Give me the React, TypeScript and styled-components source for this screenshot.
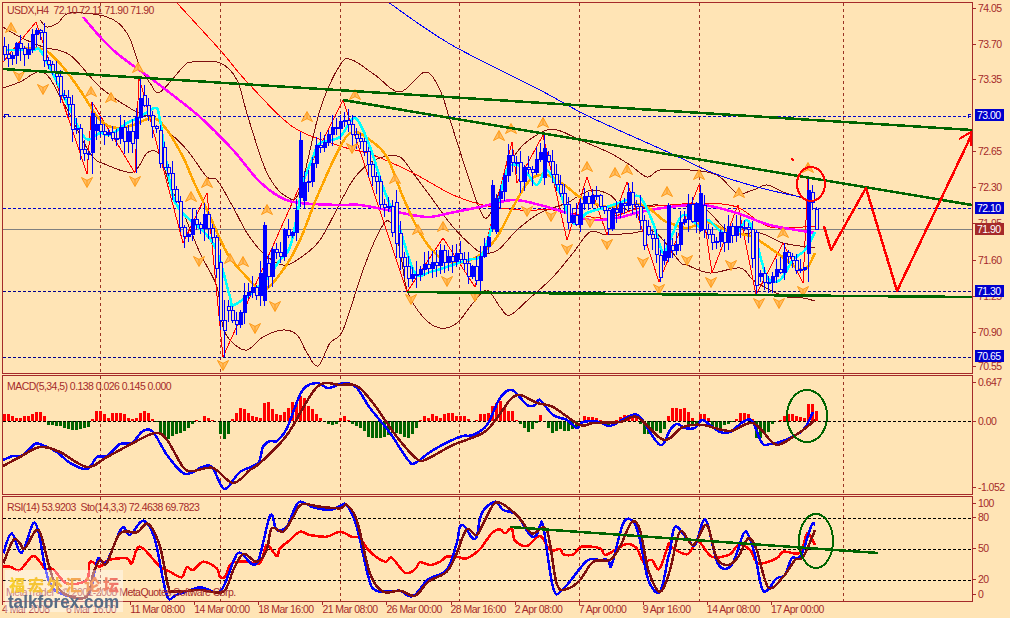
import React from "react";
import styled, { createGlobalStyle } from "styled-components";

type Pt = [number, number];
const BG = "#ffe4b5";
const BROWN = "#a52a2a";
const MAROON = "#7d0f0f";
const GREEN = "#006400";

const pts = (s: number[]): Pt[] => {
  const r: Pt[] = [];
  for (let i = 0; i + 1 < s.length; i += 2) r.push([s[i], s[i + 1]]);
  return r;
};
// points read at 3x from a crop whose corner is (ox, oy)
const crop = (ox: number, oy: number, s: number[]): Pt[] =>
  pts(s).map(([x, y]) => [ox + x / 3, oy + y / 3] as Pt);
const str = (p: Pt[]) => p.map(([x, y]) => `${x.toFixed(1)},${y.toFixed(1)}`).join(" ");
// Catmull-Rom through the points, for the indicator curves
const smooth = (p: Pt[]) => {
  let d = `M${p[0][0].toFixed(1)} ${p[0][1].toFixed(1)}`;
  for (let i = 0; i < p.length - 1; i++) {
    const a = p[Math.max(0, i - 1)];
    const b = p[i];
    const c = p[i + 1];
    const e = p[Math.min(p.length - 1, i + 2)];
    const c1: Pt = [b[0] + (c[0] - a[0]) / 6, b[1] + (c[1] - a[1]) / 6];
    const c2: Pt = [c[0] - (e[0] - b[0]) / 6, c[1] - (e[1] - b[1]) / 6];
    d += ` C${c1[0].toFixed(1)} ${c1[1].toFixed(1)} ${c2[0].toFixed(1)} ${c2[1].toFixed(1)} ${c[0].toFixed(1)} ${c[1].toFixed(1)}`;
  }
  return d;
};
const interp = (p: Pt[], x: number) => {
  if (x <= p[0][0]) return p[0][1];
  for (let i = 1; i < p.length; i++) {
    if (x <= p[i][0]) {
      const t = (x - p[i - 1][0]) / (p[i][0] - p[i - 1][0] || 1);
      return p[i - 1][1] + t * (p[i][1] - p[i - 1][1]);
    }
  }
  return p[p.length - 1][1];
};

/* ---------- main chart data ---------- */
const zigzag = pts([3, 62, 36, 22, 87, 174, 92, 102, 135, 173, 139, 77, 183, 243, 207, 193, 223, 357, 298, 190, 343, 100, 407, 292, 443, 238, 475, 287, 512, 142, 517, 183, 543, 135, 567, 240, 587, 177, 607, 235, 627, 182, 659, 282, 699, 185, 712, 273, 738, 205, 756, 295, 783, 243, 803, 283, 808, 178]);
const cyan = pts([7, 50, 33, 50, 42, 53, 67, 103, 85, 138, 100, 133, 110, 135, 127, 123, 140, 117, 155, 108, 160, 120, 170, 183, 180, 210, 213, 243, 230, 297, 234, 305, 263, 283, 280, 260, 290, 247, 298, 210, 303, 183, 313, 157, 320, 143, 340, 137, 355, 118, 370, 147, 383, 187, 400, 230, 415, 273, 430, 272, 447, 267, 467, 260, 483, 253, 497, 207, 507, 170, 517, 165, 527, 173, 537, 185, 547, 170, 560, 193, 573, 223, 587, 213, 607, 207, 627, 200, 640, 197, 653, 223, 663, 253, 670, 240, 683, 215, 700, 227, 708, 220, 723, 233, 737, 233, 747, 220, 755, 237, 767, 277, 780, 280, 793, 260, 805, 250, 815, 232]);
const orange = pts([25, 48, 45, 50, 63, 67, 80, 90, 100, 120, 117, 128, 133, 125, 153, 118, 167, 130, 183, 157, 193, 180, 207, 210, 227, 253, 243, 273, 263, 290, 283, 270, 300, 240, 317, 197, 340, 147, 353, 132, 370, 140, 387, 157, 403, 197, 420, 233, 437, 255, 457, 263, 480, 255, 497, 237, 513, 207, 530, 180, 547, 175, 567, 187, 580, 197, 607, 207, 630, 203, 647, 207, 663, 220, 670, 223, 687, 228, 707, 222, 730, 232, 753, 237, 777, 253, 803, 270, 815, 253]);
const magenta = pts([83, 17, 113, 50, 157, 83, 200, 117, 233, 150, 258, 180, 280, 197, 300, 203, 340, 205, 360, 205, 397, 212, 427, 217, 450, 213, 480, 207, 513, 200, 540, 205, 567, 213, 590, 220, 617, 218, 640, 212, 670, 207, 703, 205, 737, 213, 770, 225, 815, 233]);
const redMa = pts([177, 3, 220, 50, 248, 83, 293, 127, 340, 146, 373, 155, 413, 173, 453, 195, 483, 205, 520, 210, 553, 210, 580, 215, 607, 218, 640, 208, 670, 205, 703, 203, 737, 207, 770, 227, 815, 226]);
const blueMa = pts([388, 2, 450, 44, 540, 90, 590, 117, 670, 153, 713, 173, 757, 187, 800, 197]);
const bbUpper = pts([40, 20, 47, 27, 58, 23, 70, 13, 107, 17, 127, 33, 140, 67, 150, 83, 160, 92, 183, 67, 192, 62, 220, 63, 237, 80, 248, 117, 267, 173, 287, 197, 300, 190, 320, 110, 340, 65, 352, 60, 375, 75, 400, 92, 425, 72, 440, 90, 450, 120, 467, 173, 480, 210, 488, 217, 500, 190, 517, 152, 540, 133, 557, 130, 580, 140, 610, 153, 630, 165, 647, 177, 660, 170, 690, 170, 717, 175, 737, 193, 753, 190, 767, 185, 783, 192, 803, 198]);
const bbMid = pts([3, 27, 20, 37, 43, 47, 70, 55, 100, 87, 133, 110, 157, 120, 167, 130, 187, 150, 207, 177, 217, 180, 233, 207, 247, 233, 263, 253, 283, 265, 300, 258, 320, 240, 340, 203, 353, 180, 367, 165, 383, 157, 400, 157, 413, 173, 433, 200, 453, 227, 473, 247, 483, 253, 498, 250, 517, 230, 540, 213, 567, 203, 580, 195, 593, 190, 610, 195, 627, 210, 653, 205, 680, 207, 703, 207, 730, 232, 760, 233, 783, 243, 815, 248]);
const bbLow = pts([3, 88, 20, 82, 43, 72, 62, 100, 90, 153, 107, 165, 133, 172, 147, 153, 157, 152, 163, 163, 170, 187, 180, 205, 200, 253, 217, 287, 223, 327, 233, 343, 247, 350, 263, 337, 283, 330, 297, 335, 307, 353, 318, 366, 330, 343, 343, 330, 363, 270, 380, 230, 390, 222, 400, 250, 407, 290, 423, 317, 440, 328, 457, 323, 473, 303, 487, 290, 500, 307, 510, 315, 530, 298, 553, 277, 573, 253, 590, 232, 607, 235, 633, 233, 655, 232, 680, 262, 687, 265, 710, 273, 740, 268, 753, 280, 770, 290, 787, 297, 803, 298, 815, 301]);

const fractalsUp = pts([11, 28, 91, 92, 111, 98, 138, 68, 191, 197, 207, 183, 230, 259, 243, 262, 267, 210, 307, 117, 355, 95, 395, 179, 418, 230, 443, 227, 499, 136, 511, 129, 543, 123, 587, 167, 615, 173, 627, 170, 667, 192, 699, 175, 739, 193, 783, 233, 808, 168]);
const fractalsDown = pts([19, 76, 43, 89, 87, 182, 135, 181, 199, 261, 223, 365, 255, 328, 275, 306, 352, 148, 411, 299, 447, 281, 475, 296, 527, 211, 551, 216, 567, 249, 590, 222, 607, 244, 643, 262, 659, 289, 687, 260, 711, 282, 731, 265, 759, 303, 779, 303, 803, 291]);

type Candle = { x: number; o: number; c: number; hi: number; lo: number };
const candles: Candle[] = (() => {
  let seed = 20080417;
  const rnd = () => {
    seed = (seed * 1664525 + 1013904223) >>> 0;
    return seed / 4294967296;
  };
  const out: Candle[] = [];
  let prev = 46;
  for (let x = 815.7 - 4 * 203; x < 816; x += 4) {
    const c = 0.5 * interp(zigzag, x) + 0.5 * interp(cyan, x) + (rnd() - 0.5) * 22;
    const o = prev;
    out.push({ x, o, c, hi: Math.min(o, c) - rnd() * 12 - 1, lo: Math.max(o, c) + rnd() * 12 + 1 });
    prev = c;
  }
  const set = (x: number, up: boolean, a: number, b: number, hi?: number, lo?: number) => {
    const k = out.reduce((best, d, i) => (Math.abs(d.x - x) < Math.abs(out[best].x - x) ? i : best), 0);
    out[k] = { x: out[k].x, o: up ? b : a, c: up ? a : b, hi: hi ?? a - 5, lo: lo ?? b + 5 };
  };
  set(91, true, 113, 152, 102, 174);
  set(135, true, 117, 138, 108, 173);
  set(139, true, 98, 117, 77, 125);
  set(159, false, 130, 163);
  set(219, false, 262, 320, 250, 330);
  set(223, false, 320, 330, 300, 357);
  set(263, true, 225, 300, 222, 306);
  set(298, true, 140, 197, 132, 207);
  set(395, false, 202, 243, 190, 258);
  set(491, true, 185, 228, 180, 232);
  set(543, true, 148, 177, 135, 185);
  set(643, false, 220, 245);
  set(659, false, 255, 277, 250, 282);
  set(667, true, 205, 257, 203, 262);
  set(699, true, 193, 230, 185, 232);
  set(755, false, 232, 285, 230, 295);
  set(807.7, true, 190, 253, 177, 282);
  set(811.7, false, 192, 202, 185, 210);
  set(815.7, false, 209, 229, 207, 230);
  return out;
})();

const hand = pts([824, 226, 831, 250, 866, 188, 897, 291, 972, 134]);

/* ---------- MACD data ---------- */
const macdBlue = pts([3, 460, 13, 456, 23, 455, 35, 444, 42, 445, 57, 452, 70, 463, 87, 469, 97, 457, 107, 456, 120, 444, 132, 443, 143, 431, 153, 432, 167, 455, 183, 473, 193, 472, 202, 467, 212, 467, 222, 487, 228, 487, 240, 472, 258, 463, 263, 447, 270, 441, 277, 441, 287, 428, 302, 391, 317, 383, 328, 388, 340, 384, 347, 383, 357, 388, 370, 408, 390, 433, 408, 460, 415, 463, 430, 452, 450, 441, 463, 436, 473, 435, 487, 425, 500, 398, 512, 390, 527, 405, 535, 405, 540, 400, 553, 415, 567, 420, 577, 428, 583, 422, 600, 422, 610, 426, 630, 416, 640, 417, 660, 445, 670, 430, 677, 424, 685, 428, 695, 428, 702, 420, 710, 425, 720, 432, 730, 432, 743, 422, 752, 421, 762, 443, 770, 444, 783, 441, 803, 430, 813, 412]);
const macdMaroon = pts([3, 466, 20, 457, 40, 447, 60, 452, 87, 467, 107, 457, 133, 443, 155, 433, 167, 440, 183, 467, 193, 471, 213, 468, 233, 483, 250, 470, 260, 463, 287, 435, 317, 387, 340, 385, 357, 386, 373, 403, 397, 437, 417, 459, 427, 459, 453, 445, 483, 433, 497, 418, 510, 400, 520, 395, 537, 403, 553, 407, 580, 425, 593, 423, 620, 422, 637, 417, 660, 438, 670, 438, 683, 427, 703, 425, 730, 431, 753, 423, 773, 443, 783, 443, 803, 430, 815, 420]);
const histSegments: [number, number[]][] = [
  [3, [7, 7, 5, 3, 3, 5, 5, 7, 9, 9, 5]],
  [43, [-1, -4, -4, -5, -5, -7, -8, -9, -9, -8, -7, -6]],
  [91, [2, 10, 10, 7, 3, 8, 8, 8, 7, 3, 2, 3, 8, 10, 8, 2]],
  [155, [-1, -12, -15, -18, -15, -13, -12, -10, -7, -3]],
  [195, [1, 0, 5, 3, 1]],
  [219, [-13, -18, -13]],
  [231, [2, 8, 13, 12, 8, 5, 4, 3, 18, 19, 12, 7, 6, 9, 13, 19, 18, 25, 23, 15, 12, 7, 3]],
  [327, [-3, -4, -3, 3, 5, 1]],
  [351, [-3, -5, -7, -10, -16, -17, -17, -17, -16, -14, -12, -12, -13, -16, -17, -13, -7]],
  [419, [1, 5, 3, 7, 5, 3, 7, 8, 8, 5, 5, 5, 2, 0, 1, 7, 7, 8, 15, 18, 20, 13, 10, 10, 1]],
  [519, [-3, -7, -11, -8, -2]],
  [539, [6, 0]],
  [547, [-7, -12, -10, -8, -10, -10, -8, -8]],
  [583, [5, 4, 4, 3, 1]],
  [603, [-4, -5, -3]],
  [615, [1, 4, 6, 6, 5, 3]],
  [639, [-3, -13, -13, -12, -10, -12, -8]],
  [667, [5, 13, 13, 12, 13, 9, 3]],
  [687, [-3, -3, -3]],
  [699, [7, 7, 3]],
  [711, [-7, -8, -7, -4, -3, -1]],
  [735, [2, 8, 8, 7, 2]],
  [755, [-17, -17, -13, -11, -3]],
  [775, [0, 1, 5, 7, 7, 5, 4, 3, 17, 17, 10]],
];
const hist: { x: number; v: number }[] = histSegments.flatMap(([x0, vs]) =>
  vs.map((v, i) => ({ x: x0 + i * 4, v })),
);

/* ---------- RSI data ---------- */
const stoBlue = [
  ...crop(0, 370, [10, 550, 35, 490, 65, 548, 105, 458, 135, 590, 150, 640, 180, 670, 260, 680, 285, 600, 295, 565, 320, 575, 365, 475, 390, 495, 430, 452, 465, 510, 500, 675, 530, 675, 600, 652, 660, 665, 700, 575, 720, 548, 770, 580, 810, 437, 830, 480, 860, 470, 880, 425, 900, 395, 940, 412, 990, 420, 1020, 408]),
  ...crop(340, 370, [20, 405, 50, 470, 85, 620, 105, 660, 150, 665, 180, 662, 205, 677, 225, 675, 265, 628, 320, 600, 350, 520, 360, 470, 375, 470, 395, 502, 410, 500, 425, 430, 465, 395, 490, 420, 530, 435, 570, 495, 590, 495, 600, 468, 610, 470, 640, 655, 670, 657, 740, 573, 780, 570, 805, 570, 815, 585, 850, 460, 880, 455, 900, 510, 925, 630, 960, 665, 985, 560, 990, 545]),
  ...crop(670, 370, [15, 470, 50, 505, 75, 525, 100, 452, 115, 470, 145, 583, 185, 585, 220, 492, 235, 495, 255, 555, 280, 663, 320, 625, 345, 615, 365, 565, 385, 565, 400, 540, 425, 465, 435, 465]),
];
const stoMaroon = [
  ...crop(0, 370, [10, 580, 40, 510, 60, 520, 75, 535, 115, 480, 145, 580, 165, 640, 200, 675, 260, 680, 280, 610, 300, 570, 320, 580, 360, 490, 410, 487, 445, 462, 480, 530, 505, 650, 520, 665, 600, 660, 670, 665, 700, 600, 730, 552, 770, 575, 800, 540, 815, 475, 850, 485, 880, 440, 905, 403, 960, 410, 1020, 415]),
  ...crop(340, 370, [20, 405, 50, 450, 90, 610, 130, 665, 180, 662, 225, 677, 265, 635, 320, 605, 350, 550, 380, 478, 410, 495, 435, 450, 470, 397, 530, 435, 575, 490, 620, 480, 650, 640, 680, 657, 720, 630, 760, 575, 810, 570, 840, 530, 875, 457, 900, 480, 925, 600, 960, 665, 990, 600]),
  ...crop(670, 370, [30, 485, 70, 525, 110, 465, 140, 565, 175, 585, 205, 560, 235, 505, 260, 540, 295, 652, 340, 620, 375, 570, 400, 560, 435, 480]),
];
const rsiRed = [
  ...crop(0, 370, [10, 590, 30, 590, 60, 600, 100, 558, 135, 595, 160, 598, 200, 640, 260, 630, 270, 575, 300, 590, 325, 570, 380, 565, 395, 580, 420, 530, 480, 590, 510, 605, 545, 622, 560, 592, 580, 600, 610, 575, 650, 595, 660, 620, 675, 620, 695, 580, 740, 575, 780, 580, 800, 525, 830, 558, 840, 535, 870, 510, 900, 485, 930, 495, 980, 500, 1020, 485]),
  ...crop(340, 370, [35, 500, 60, 505, 90, 545, 135, 575, 155, 563, 195, 608, 225, 598, 240, 577, 270, 585, 300, 575, 320, 560, 350, 560, 380, 565, 420, 537, 455, 490, 480, 478, 495, 490, 515, 475, 525, 512, 560, 528, 600, 498, 630, 540, 660, 537, 670, 553, 700, 553, 725, 530, 780, 535, 795, 555, 825, 540, 860, 522, 890, 535, 910, 575, 935, 570, 958, 597, 985, 525, 990, 528]),
  ...crop(670, 370, [50, 553, 85, 515, 125, 560, 180, 553, 205, 525, 240, 540, 265, 580, 320, 565, 340, 545, 390, 548, 412, 490, 435, 525]),
];

const GRID_X = [100, 220, 340, 459, 579, 699, 843];

/* ---------- axis labels ---------- */
const MAIN_TICKS: [string, number][] = [["74.05", 8], ["73.70", 44], ["73.35", 79], ["72.65", 151], ["72.30", 187], ["71.95", 223], ["71.60", 260], ["71.25", 296], ["70.90", 332], ["70.55", 366]];
const MAIN_BOXES: [string, number, boolean][] = [["73.00", 115, false], ["72.10", 208, false], ["71.90", 229, true], ["71.30", 291, false], ["70.65", 356, false]];
const MACD_TICKS: [string, number][] = [["0.647", 382], ["0.00", 421], ["-1.052", 487]];
const RSI_TICKS: [string, number][] = [["100", 503], ["80", 517], ["50", 548], ["20", 579], ["0", 594]];
const TIMES = ["4 Mar 2008", "6 Mar 16:00", "11 Mar 08:00", "14 Mar 00:00", "18 Mar 16:00", "21 Mar 08:00", "26 Mar 00:00", "28 Mar 16:00", "2 Apr 08:00", "7 Apr 00:00", "9 Apr 16:00", "14 Apr 08:00", "17 Apr 00:00"];

/* ---------- styles ---------- */
const Global = createGlobalStyle`
  html, body { margin: 0; padding: 0; background: ${BG}; }
  #root { width: 1010px; height: 618px; overflow: hidden; }
`;
const Stage = styled.div`
  position: relative;
  font-family: "Liberation Sans", Arial, sans-serif;
  font-size: 10.5px;
  letter-spacing: -0.55px;
  color: ${BROWN};
`;
const Terminal = styled.div`
  width: 1010px;
  height: 618px;
  box-sizing: border-box;
  padding: 2px 0 0 2px;
  display: flex;
  flex-direction: column;
  gap: 1px;
  background: ${BG};
`;
const Pane = styled.section<{ $h: number }>`
  display: flex;
  height: ${(p) => p.$h}px;
  flex: none;
`;
const Plot = styled.div`
  position: relative;
  width: 971px;
  box-sizing: border-box;
  border: 1px solid ${BROWN};
  overflow: hidden;
`;
const Drawing = styled.svg`
  display: block;
  width: 969px;
  height: 100%;
  shape-rendering: crispEdges;
`;
const Legend = styled.div<{ $top: number }>`
  position: absolute;
  left: 4px;
  top: ${(p) => p.$top}px;
  white-space: pre;
  line-height: 13px;
`;
const Axis = styled.div`
  position: relative;
  flex: 1;
  margin-top: -2px;
`;
const Tick = styled.span.attrs<{ $y: number }>((p) => ({ style: { top: p.$y } }))<{ $y: number }>`
  position: absolute;
  left: 5px;
  line-height: 12px;
  margin-top: -6px;
  white-space: nowrap;
  &::before {
    content: "";
    position: absolute;
    left: -5px;
    top: 6px;
    width: 3px;
    height: 1px;
    background: ${BROWN};
  }
`;
const PriceBox = styled.span.attrs<{ $y: number }>((p) => ({ style: { top: p.$y } }))<{ $y: number; $current?: boolean }>`
  position: absolute;
  left: 2px;
  width: 29px;
  height: 12px;
  margin-top: -6px;
  line-height: 12px;
  padding-left: 2px;
  box-sizing: border-box;
  background: ${(p) => (p.$current ? BROWN : "#0000cd")};
  color: #fff;
`;
const TimeAxis = styled.div`
  display: flex;
  margin-top: -2px;
`;
const TimeCell = styled.div`
  flex: none;
  width: 64.08px;
  height: 14px;
  padding-top: 2px;
  box-sizing: content-box;
  position: relative;
  white-space: nowrap;
  line-height: 12px;
  &::before {
    content: "";
    position: absolute;
    left: 0;
    top: 0;
    width: 1px;
    height: 4px;
    background: ${BROWN};
  }
`;
const Watermark = styled.div`
  position: absolute;
  left: 5px;
  top: 570px;
  width: 118px;
  height: 42px;
  padding-top: 5px;
  box-sizing: border-box;
  background: rgba(255, 255, 255, 0.42);
  display: flex;
  flex-direction: column;
  align-items: center;
`;
const WatermarkHan = styled.div`
  font-family: "Noto Sans CJK SC", sans-serif;
  font-weight: 900;
  font-size: 16px;
  line-height: 18px;
  height: 18px;
  letter-spacing: 2.8px;
  padding-left: 3px;
  white-space: nowrap;
  background: linear-gradient(90deg, #f7d02c 0%, #f5bd3a 40%, #f39a6a 75%, #ef6a6a 100%);
  -webkit-background-clip: text;
  background-clip: text;
  color: transparent;
`;
const WatermarkLatin = styled.div`
  font-family: "Liberation Sans", Arial, sans-serif;
  font-weight: 700;
  font-size: 18px;
  line-height: 18px;
  letter-spacing: 0;
  color: #566c86;
  white-space: nowrap;
  transform: scaleX(0.95);
`;
const Copyright = styled.div`
  position: absolute;
  left: 6px;
  top: 586px;
  line-height: 12px;
  white-space: nowrap;
`;

/* ---------- drawing parts ---------- */
const Line = ({ p, c, w = 1 }: { p: Pt[]; c: string; w?: number }) => (
  <polyline points={str(p)} fill="none" stroke={c} strokeWidth={w} strokeLinejoin="round" />
);
const Curve = ({ p, c, w = 1 }: { p: Pt[]; c: string; w?: number }) => (
  <path d={smooth(p)} fill="none" stroke={c} strokeWidth={w} strokeLinejoin="round" />
);
const Grid = ({ top, bottom }: { top: number; bottom: number }) => (
  <g stroke="#9a3324" strokeDasharray="3 3">
    {GRID_X.map((x) => (
      <line key={x} x1={x} x2={x} y1={top} y2={bottom} />
    ))}
  </g>
);
const Level = ({ y, c, dash = true }: { y: number; c: string; dash?: boolean }) => (
  <line x1={3} x2={972} y1={y} y2={y} stroke={c} strokeDasharray={dash ? "3 2" : undefined} />
);
const Fractal = ({ x, y, down }: { x: number; y: number; down?: boolean }) => (
  <g transform={`translate(${x} ${y})${down ? " scale(1 -1)" : ""}`} shapeRendering="auto">
    <path d="M0 -5.5 L5.5 4.5 L0.8 2 L-0.8 2 L-5.5 4.5 Z" fill="#ffbe66" stroke="#ff9a14" strokeWidth={1} strokeLinejoin="round" />
    <path d="M0 -4 V2" stroke="#ff9a14" strokeWidth={1} fill="none" />
  </g>
);
const CandleMark = ({ d }: { d: Candle }) => {
  const up = d.c < d.o;
  const top = Math.min(d.o, d.c);
  const h = Math.max(1, Math.abs(d.o - d.c));
  const cx = Math.round(d.x);
  return (
    <g>
      <line x1={cx + 0.5} x2={cx + 0.5} y1={d.hi} y2={d.lo} stroke="#0000ff" />
      <rect x={cx - 1} y={top} width={3} height={h} fill={up ? "#0000ff" : BG} stroke="#0000ff" />
    </g>
  );
};

const MainDrawing = () => (
  <Drawing viewBox="3 3 969 370">
    <Grid top={3} bottom={373} />
    <Level y={229} c="#808080" dash={false} />
    <Level y={116} c="#0000cd" />
    <Level y={208} c="#0000cd" />
    <Level y={291} c="#00008b" />
    <Level y={357} c="#00008b" />
    <path d="M4 118 V114 H8 V116 M968 118 V114 H971" fill="none" stroke="#0000cd" />
    <Curve p={bbUpper} c={MAROON} />
    <Curve p={bbMid} c={MAROON} />
    <Curve p={bbLow} c={MAROON} />
    <Curve p={redMa} c="#ff0000" />
    <Curve p={blueMa} c="#0000ff" />
    <Line p={zigzag} c="#ff0000" />
    <Curve p={magenta} c="#ff00ff" w={2.5} />
    <Curve p={orange} c="#ffa500" w={2.5} />
    <Curve p={cyan} c="#00ffff" w={2.5} />
    {candles.map((d) => (
      <CandleMark key={d.x} d={d} />
    ))}
    {fractalsUp.map(([x, y]) => (
      <Fractal key={`u${x}`} x={x} y={y} />
    ))}
    {fractalsDown.map(([x, y]) => (
      <Fractal key={`d${x}`} x={x} y={y} down />
    ))}
    <Line p={[[3, 69], [972, 130]]} c={GREEN} w={2.5} />
    <Line p={[[343, 100], [972, 205]]} c={GREEN} w={2.5} />
    <Line p={[[407, 292], [972, 297]]} c={GREEN} w={2.5} />
    <ellipse cx={811} cy={184} rx={14} ry={17} fill="none" stroke="#ff0000" strokeWidth={2} />
    <Line p={hand} c="#ff0000" w={2.5} />
    <Line p={[[959, 139], [971, 132], [971, 146]]} c="#ff0000" w={2} />
    <line x1={792} y1={158} x2={793} y2={161} stroke="#ff0000" strokeWidth={2} />
  </Drawing>
);

const MacdDrawing = () => (
  <Drawing viewBox="3 376 969 118">
    <Grid top={376} bottom={494} />
    {hist.map(({ x, v }) => (
      <rect key={x} x={x} y={v > 0 ? 421 - v : 421} width={3} height={Math.abs(v)} fill={v > 0 ? "#ff0000" : GREEN} />
    ))}
    <Level y={421} c="#000" />
    <Curve p={macdBlue} c="#0000ff" w={2.5} />
    <Curve p={macdMaroon} c={MAROON} w={2.5} />
    <ellipse cx={807} cy={416} rx={20} ry={26} fill="none" stroke={GREEN} strokeWidth={2} />
  </Drawing>
);

const RsiDrawing = () => (
  <Drawing viewBox="3 497 969 104">
    <Grid top={497} bottom={601} />
    <Level y={518} c="#000" />
    <Level y={549} c="#000" />
    <Level y={580} c="#000" />
    <Curve p={rsiRed} c="#ff0000" w={2.5} />
    <Curve p={stoBlue} c="#0000ff" w={2.5} />
    <Curve p={stoMaroon} c={MAROON} w={2.5} />
    <Line p={[[510, 527], [878, 553]]} c={GREEN} w={2.5} />
    <ellipse cx={816} cy={541} rx={17} ry={27} fill="none" stroke={GREEN} strokeWidth={2} />
  </Drawing>
);

export default function App() {
  return (
    <Stage>
      <Global />
      <Terminal>
        <Pane $h={372}>
          <Plot>
            <MainDrawing />
            <Legend $top={1}>{"USDX,H4  72.10 72.11 71.90 71.90"}</Legend>
          </Plot>
          <Axis>
            {MAIN_TICKS.map(([t, y]) => (
              <Tick key={t} $y={y}>{t}</Tick>
            ))}
            {MAIN_BOXES.map(([t, y, cur]) => (
              <PriceBox key={t} $y={y} $current={cur}>{t}</PriceBox>
            ))}
          </Axis>
        </Pane>
        <Pane $h={120}>
          <Plot>
            <MacdDrawing />
            <Legend $top={4}>MACD(5,34,5) 0.138 0.026 0.145 0.000</Legend>
          </Plot>
          <Axis>
            {MACD_TICKS.map(([t, y]) => (
              <Tick key={t} $y={y - 373}>{t}</Tick>
            ))}
          </Axis>
        </Pane>
        <Pane $h={106}>
          <Plot>
            <RsiDrawing />
            <Legend $top={4}>{"RSI(14) 53.9203  Sto(14,3,3) 72.4638 69.7823"}</Legend>
          </Plot>
          <Axis>
            {RSI_TICKS.map(([t, y]) => (
              <Tick key={t} $y={y - 494}>{t}</Tick>
            ))}
          </Axis>
        </Pane>
        <TimeAxis>
          {TIMES.map((t) => (
            <TimeCell key={t}>{t}</TimeCell>
          ))}
        </TimeAxis>
      </Terminal>
      <Copyright>MetaTrader - © 2001-2008 MetaQuotes Software Corp.</Copyright>
      <Watermark>
        <WatermarkHan>福宏外汇论坛</WatermarkHan>
        <WatermarkLatin>talkforex.com</WatermarkLatin>
      </Watermark>
    </Stage>
  );
}
